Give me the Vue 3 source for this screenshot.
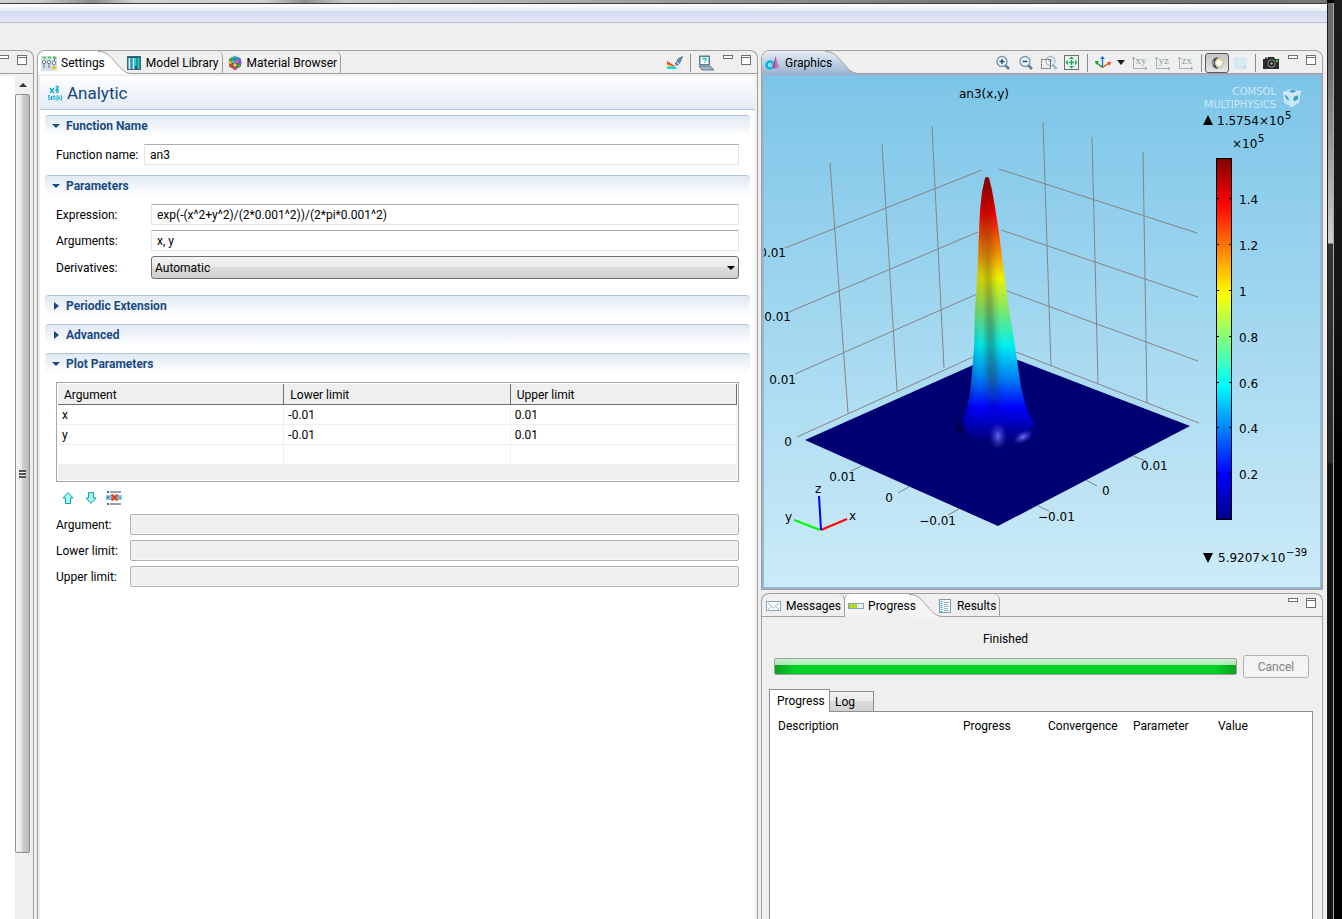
<!-- * {Script} part of code -->
<script setup>
import { ref, reactive } from 'vue'

const functionName = ref('an3')
const expression = ref('exp(-(x^2+y^2)/(2*0.001^2))/(2*pi*0.001^2)')
const functionArgs = ref('x, y')
const derivatives = ref('Automatic')

const open = reactive({
  name: true,
  parameters: true,
  periodic: false,
  advanced: false,
  plot: true
})

const limits = ref([
  { argument: 'x', lower: '-0.01', upper: '0.01' },
  { argument: 'y', lower: '-0.01', upper: '0.01' },
  { argument: '', lower: '', upper: '' }
])

const logColumns = ['Description', 'Progress', 'Convergence', 'Parameter', 'Value']

// wall grid of the 3D plot, x1 y1 x2 y2
const gridLines = [
  [218, 94, 21, 172], [214, 156, 25, 236], [213, 218, 31, 298], [209, 281, 33, 361],
  [235, 93, 433, 157], [237, 154, 434, 221], [243, 215, 434, 285], [252, 276, 435, 347],
  [66, 87, 84, 337], [118, 68, 133, 315], [168, 50, 180, 292],
  [279, 46, 287, 290], [328, 61, 334, 307], [379, 76, 383, 327],
  [98, 390, 87, 395], [145, 411, 134, 417], [195, 433, 184, 439],
  [369, 380, 382, 385], [322, 404, 333, 410], [274, 430, 285, 435]
]

const plotLabels = [
  { x: 22, y: 181, text: '0.01', anchor: 'end' },
  { x: 27, y: 245, text: '0.01', anchor: 'end' },
  { x: 32, y: 308, text: '0.01', anchor: 'end' },
  { x: 28, y: 370, text: '0', anchor: 'end' },
  { x: 92, y: 405, text: '0.01', anchor: 'end' },
  { x: 129, y: 426, text: '0', anchor: 'end' },
  { x: 192, y: 449, text: '−0.01', anchor: 'end' },
  { x: 377, y: 394, text: '0.01', anchor: 'start' },
  { x: 338, y: 419, text: '0', anchor: 'start' },
  { x: 274, y: 445, text: '−0.01', anchor: 'start' },
  { x: 51, y: 417, text: 'z', anchor: 'start' },
  { x: 21, y: 445, text: 'y', anchor: 'start' },
  { x: 85, y: 444, text: 'x', anchor: 'start' }
]

const legendTicks = [
  { y: 122, text: '1.4' },
  { y: 168, text: '1.2' },
  { y: 214, text: '1' },
  { y: 260, text: '0.8' },
  { y: 306, text: '0.6' },
  { y: 351, text: '0.4' },
  { y: 397, text: '0.2' }
]
</script>

<!-- * Template {Html} part of code -->
<template>
  <div class="desktop">
    <div class="window">
      <div class="desktop-strip"></div>
      <div class="title-bar"></div>
      <div class="workbench">
        <!-- model tree, cut off by the window edge -->
        <section class="panel tree-panel">
          <div class="panel-head">
            <div class="tools">
              <button class="min-btn" aria-label="Minimize"></button>
              <button class="max-btn" aria-label="Maximize"></button>
            </div>
          </div>
          <div class="tree-body">
            <div class="tree-content"></div>
            <div class="scrollbar">
              <div class="scroll-up"></div>
              <div class="scroll-thumb">
                <div class="scroll-grip"></div>
              </div>
            </div>
          </div>
        </section>

        <!-- settings -->
        <section class="panel">
          <div class="panel-head">
            <button class="tab active">
              <svg class="slope" viewBox="0 0 33 23"><path class="slope-fill" d="M0 0C9 0 12 5 18 12S27 22 33 22.500V23H0Z" /><path class="slope-line" d="M0 .5C9 .5 12 5 18 12S27 22 33 22.500" /></svg>
              <svg class="icon" viewBox="0 0 16 16">
                <rect width="16" height="15" y="1" fill="#d7e0e8" />
                <path d="M2 2.500h3M7 2.500h3M12 2.500h3" stroke="#3cc52c" stroke-width="1.500" />
                <g fill="#fff" stroke="#6f8797"><circle cx="3" cy="7" r="1.700" /><circle cx="8" cy="7" r="1.700" /><circle cx="13" cy="8" r="1.700" /></g>
                <path d="M3 9v4M8 9v4M13.500 3v3" stroke="#6f8797" stroke-width="1.200" />
                <rect x="11.500" y="11" width="3" height="3" fill="#f7b21c" />
              </svg>
              <span>Settings</span>
            </button>
            <button class="tab">
              <svg class="icon" viewBox="0 0 16 16">
                <rect x="1.500" y="1.500" width="13" height="13" fill="#12606f" stroke="#3f6474" />
                <path d="M3.500 3v11M7.500 3v11" stroke="#eefcff" stroke-width="2" />
                <path d="M5.500 3v11" stroke="#18a8e0" stroke-width="2" />
                <path d="M9.500 3v8M12.500 3v11" stroke="#1fd4cc" stroke-width="2" />
              </svg>
              <span>Model Library</span>
            </button>
            <button class="tab">
              <svg class="icon" viewBox="0 0 16 16">
                <path d="M8 1l6 3v7l-6 4-6-4V4z" fill="#55606a" />
                <circle cx="8" cy="2.500" r="1.700" fill="#2cb5d8" /><circle cx="4.500" cy="4" r="1.700" fill="#35b44a" /><circle cx="11.500" cy="4" r="1.700" fill="#2c8fe0" />
                <circle cx="3" cy="7.500" r="1.700" fill="#f0b429" /><circle cx="6.500" cy="6.500" r="1.700" fill="#22c6d8" /><circle cx="10" cy="6.500" r="1.700" fill="#e55bd0" /><circle cx="13" cy="7.500" r="1.700" fill="#8d4ce0" />
                <circle cx="4" cy="11" r="1.700" fill="#e8442e" /><circle cx="8" cy="10" r="1.700" fill="#f0d429" /><circle cx="12" cy="11" r="1.700" fill="#35b44a" />
                <circle cx="8" cy="13.500" r="1.700" fill="#e23a5a" />
              </svg>
              <span>Material Browser</span>
            </button>
            <div class="tools">
              <button class="tool" aria-label="Plot">
                <svg class="icon" viewBox="0 0 16 16">
                  <path d="M0 6l8 5v3H0z" fill="#f0452a" />
                  <path d="M0 9l8 3v2H0z" fill="#ffd92e" />
                  <path d="M0 11.500h8l2 2.500H0z" fill="#17d3f2" />
                  <path d="M15.500 1.500l-4 2-3 5 1 2 3-2z" fill="#5a8db8" stroke="#3b6687" stroke-width=".7" />
                  <path d="M10 7l2 2" stroke="#eaf4fb" />
                </svg>
              </button>
              <span class="sep"></span>
              <button class="tool" aria-label="Help">
                <svg class="icon" viewBox="0 0 16 16">
                  <rect x="1" y=".500" width="11" height="10" fill="#5f7d92" />
                  <rect x="2.500" y="2" width="8" height="7" fill="#fff" />
                  <path d="M5 4.500V3.500h3v1.500l-1.500 1M6.500 7v1" fill="none" stroke="#10c8c0" stroke-width="1.300" />
                  <path d="M1 11h11l4 4H4z" fill="#9fb4c3" stroke="#5f7d92" />
                </svg>
              </button>
              <button class="min-btn" aria-label="Minimize"></button>
              <button class="max-btn" aria-label="Maximize"></button>
            </div>
          </div>

          <div class="form">
            <header class="form-head">
              <svg class="icon" viewBox="0 0 16 16">
                <path d="M3 3l4 5M7 3L3 8M9 2.500c0-2 3-1 2 0L9 5h3M9 7h3" fill="none" stroke="#11a9d0" stroke-width="1.400" />
                <path d="M3 10.500H1.500v2H3v2H1M4.500 11v4M6 15v-4h2v4M10.500 10q-1.500 3 0 6M11 11.500l2 3M13 11.500l-2 3M14 10q1.500 3 0 6" fill="none" stroke="#19b3cf" />
              </svg>
              <h1>Analytic</h1>
            </header>

            <div class="section">
              <button class="section-head" @click="open.name = !open.name">
                <span class="twisty" :class="{ opened: open.name }"></span>Function Name
              </button>
              <div class="section-body" v-if="open.name">
                <div class="row">
                  <label for="fn-name" class="label-name">Function name:</label>
                  <input id="fn-name" type="text" v-model="functionName" />
                </div>
              </div>
            </div>

            <div class="section">
              <button class="section-head" @click="open.parameters = !open.parameters">
                <span class="twisty" :class="{ opened: open.parameters }"></span>Parameters
              </button>
              <div class="section-body parameters" v-if="open.parameters">
                <div class="row">
                  <label for="expression" class="label-param">Expression:</label>
                  <input id="expression" type="text" v-model="expression" />
                </div>
                <div class="row">
                  <label for="arguments" class="label-param">Arguments:</label>
                  <input id="arguments" type="text" v-model="functionArgs" />
                </div>
                <div class="row">
                  <label for="derivatives" class="label-param">Derivatives:</label>
                  <div class="select-box">
                    <select id="derivatives" v-model="derivatives">
                      <option>Automatic</option>
                      <option>Manual</option>
                    </select>
                  </div>
                </div>
              </div>
            </div>

            <div class="section">
              <button class="section-head" @click="open.periodic = !open.periodic">
                <span class="twisty" :class="{ opened: open.periodic }"></span>Periodic Extension
              </button>
            </div>

            <div class="section">
              <button class="section-head" @click="open.advanced = !open.advanced">
                <span class="twisty" :class="{ opened: open.advanced }"></span>Advanced
              </button>
            </div>

            <div class="section">
              <button class="section-head" @click="open.plot = !open.plot">
                <span class="twisty" :class="{ opened: open.plot }"></span>Plot Parameters
              </button>
              <div class="section-body" v-if="open.plot">
                <div class="limits-box">
                  <table class="limits">
                    <thead>
                      <tr>
                        <th>Argument</th>
                        <th>Lower limit</th>
                        <th>Upper limit</th>
                      </tr>
                    </thead>
                    <tbody>
                      <tr v-for="(row, i) in limits" :key="i">
                        <td>{{ row.argument }}</td>
                        <td>{{ row.lower }}</td>
                        <td>{{ row.upper }}</td>
                      </tr>
                    </tbody>
                  </table>
                </div>
                <div class="limits-tools">
                  <button class="tool" aria-label="Move up">
                    <svg class="icon" viewBox="0 0 16 16"><path d="M8 2.500l5 5.500h-2.500v5.500h-5V8H3z" fill="#a5fbf3" stroke="#0ba3a3" /></svg>
                  </button>
                  <button class="tool" aria-label="Move down">
                    <svg class="icon" viewBox="0 0 16 16"><path d="M8 13.500L3 8h2.500V2.500h5V8H13z" fill="#a5fbf3" stroke="#0ba3a3" /></svg>
                  </button>
                  <button class="tool" aria-label="Delete">
                    <svg class="icon" viewBox="0 0 16 16">
                      <rect y="5" width="16" height="5" fill="#79cdf0" />
                      <path d="M4 2h11M4 14h11M4 7.500h11" stroke="#8fa3b2" stroke-width="2" />
                      <path d="M1 2h2M1 14h2M1 7.500h2" stroke="#536b7c" stroke-width="2" />
                      <path d="M5.500 4.500l6 6M11.500 4.500l-6 6" stroke="#ee3d0c" stroke-width="2" />
                    </svg>
                  </button>
                </div>
                <div class="row">
                  <label for="argument" class="label-plot">Argument:</label>
                  <input id="argument" type="text" disabled />
                </div>
                <div class="row">
                  <label for="lower" class="label-plot">Lower limit:</label>
                  <input id="lower" type="text" disabled />
                </div>
                <div class="row">
                  <label for="upper" class="label-plot">Upper limit:</label>
                  <input id="upper" type="text" disabled />
                </div>
              </div>
            </div>
          </div>
        </section>

        <div class="right-column">
          <!-- graphics -->
          <section class="panel focused">
            <div class="panel-head">
              <button class="tab active">
                <svg class="slope" viewBox="0 0 33 23"><path fill="url(#tabBlue)" d="M0 0C9 0 12 5 18 12S27 22 33 22.500V23H0Z" /><path class="slope-line" d="M0 .5C9 .5 12 5 18 12S27 22 33 22.500" />
                  <defs><linearGradient id="tabBlue" x1="0" y1="0" x2="0" y2="1"><stop offset="0" stop-color="#e6edf4" /><stop offset="1" stop-color="#99b4d1" /></linearGradient></defs>
                </svg>
                <svg class="icon" viewBox="0 0 16 16">
                  <circle cx="5" cy="10" r="3.500" fill="#7fe3f2" stroke="#0fb4d8" stroke-width="2.500" />
                  <path d="M10.500 1L7 12q3 3 7 0z" fill="#c078bd" />
                  <path d="M10.500 1L8 13l2 .700z" fill="#8c4a92" />
                </svg>
                <span>Graphics</span>
              </button>
              <div class="tools">
                <button class="tool" aria-label="Zoom in">
                  <svg class="icon" viewBox="0 0 16 16">
                    <path d="M10 10l4 4" stroke="#5b7f9c" stroke-width="2.500" />
                    <circle cx="7" cy="6.500" r="5" fill="#eef5f9" stroke="#7795aa" stroke-width="1.300" />
                    <path d="M4.500 6.500h5M7 4v5" stroke="#1d4f7c" stroke-width="1.400" />
                  </svg>
                </button>
                <button class="tool" aria-label="Zoom out">
                  <svg class="icon" viewBox="0 0 16 16">
                    <path d="M10 10l4 4" stroke="#5b7f9c" stroke-width="2.500" />
                    <circle cx="7" cy="6.500" r="5" fill="#eef5f9" stroke="#7795aa" stroke-width="1.300" />
                    <path d="M4.500 6.500h5" stroke="#1d4f7c" stroke-width="1.400" />
                  </svg>
                </button>
                <button class="tool" aria-label="Zoom box">
                  <svg class="icon" viewBox="0 0 16 16">
                    <path d="M12 10l3.500 4" stroke="#9db3c3" stroke-width="2.500" />
                    <circle cx="9.500" cy="6" r="4.500" fill="#eef2f5" stroke="#a9b9c4" stroke-width="1.300" />
                    <path d="M7.500 6h4M9.500 4v4" stroke="#8fa5b4" />
                    <path d="M.5 4.500h9v9h-9z" fill="none" stroke="#555" stroke-dasharray="2 1" />
                  </svg>
                </button>
                <button class="tool" aria-label="Zoom extents">
                  <svg class="icon" viewBox="0 0 16 16">
                    <rect x=".500" y=".500" width="14" height="14" fill="#e6f5ec" stroke="#6c7073" />
                    <path d="M7.500 5v5M5 7.500h5" stroke="#1ca551" stroke-width="1.300" />
                    <path d="M7.500 1.500L10 4H5zM7.500 13.500L10 11H5zM1.500 7.500L4 5v5zM13.500 7.500L11 5v5z" fill="#1ca551" />
                  </svg>
                </button>
                <span class="sep"></span>
                <button class="tool" aria-label="Default view">
                  <svg class="icon" viewBox="0 0 16 16">
                    <path d="M7.500 12V3" stroke="#1272d6" stroke-width="1.300" /><path d="M5 4L7.500 1 10 4z" fill="#1272d6" />
                    <path d="M7.500 12.500L2 8" stroke="#11a424" stroke-width="1.500" /><path d="M0 6h4L1 10z" fill="#11a424" />
                    <path d="M7.500 12.500l6-4" stroke="#ee4a12" stroke-width="1.500" /><path d="M16 7l-1.500 4L12 7z" fill="#ee4a12" />
                  </svg>
                </button>
                <button class="drop" aria-label="Views"></button>
                <button class="tool" aria-label="XY view">
                  <svg class="icon" viewBox="0 0 16 16"><path class="axes" d="M1.500 2v11.500H14M0 4l1.500-2L3 4M13 12l2 1.500-2 1.500" /><text class="axes-text" x="3.500" y="9">xy</text></svg>
                </button>
                <button class="tool" aria-label="YZ view">
                  <svg class="icon" viewBox="0 0 16 16"><path class="axes" d="M1.500 2v11.500H14M0 4l1.500-2L3 4M13 12l2 1.500-2 1.500" /><text class="axes-text" x="3.500" y="9">yz</text></svg>
                </button>
                <button class="tool" aria-label="ZX view">
                  <svg class="icon" viewBox="0 0 16 16"><path class="axes" d="M1.500 2v11.500H14M0 4l1.500-2L3 4M13 12l2 1.500-2 1.500" /><text class="axes-text" x="3.500" y="9">zx</text></svg>
                </button>
                <span class="sep"></span>
                <button class="tool toggled" aria-label="Scene light" aria-pressed="true">
                  <svg class="icon" viewBox="0 0 16 16">
                    <path d="M9 2A6 6 0 1 0 9 14Q6 8 9 2z" fill="#4d5052" />
                    <path d="M8 4l4-1 3 5-3 5-4-1-2-4z" fill="#fdfdf4" stroke="#b9b9b0" />
                    <circle cx="10" cy="8" r="3.500" fill="#fff" stroke="#e6cd6a" />
                    <path d="M2 8l3-2.500v5z" fill="#8b9bb0" />
                  </svg>
                </button>
                <button class="tool" aria-label="Transparency">
                  <svg class="icon" viewBox="0 0 16 16">
                    <path d="M2 5l3-3h10v9l-3 3H2z" fill="#b8d0de" />
                    <rect x="5" y="2" width="10" height="9" fill="#d9ebf4" />
                    <path d="M2 4h10v10H2z" fill="#dcecf5" fill-opacity=".8" />
                  </svg>
                </button>
                <span class="sep"></span>
                <button class="tool" aria-label="Image snapshot">
                  <svg class="icon" viewBox="0 0 16 16">
                    <path d="M0 4h4l1-2h6l1 2h4v10H0z" fill="#2b2b2b" />
                    <rect x="2" y="2.500" width="2" height="1.500" fill="#444" />
                    <circle cx="8.500" cy="8.500" r="4" fill="#8a8a8a" /><circle cx="8.500" cy="8.500" r="3" fill="#1d1d1d" /><circle cx="8.500" cy="8.500" r="1.300" fill="#b0b0b0" />
                    <rect x="13" y="5" width="2" height="2" fill="#31d04a" />
                  </svg>
                </button>
                <button class="min-btn" aria-label="Minimize"></button>
                <button class="max-btn" aria-label="Maximize"></button>
              </div>
            </div>

            <div class="canvas">
              <svg class="plot" viewBox="0 0 556 511" role="img" aria-label="an3(x,y)">
                <defs>
                  <linearGradient id="legend" x1="0" y1="1" x2="0" y2="0">
                    <stop offset="0" stop-color="#000084" />
                    <stop offset=".125" stop-color="#0000ff" />
                    <stop offset=".375" stop-color="#00ffff" />
                    <stop offset=".625" stop-color="#ffff00" />
                    <stop offset=".875" stop-color="#ff0000" />
                    <stop offset="1" stop-color="#800000" />
                  </linearGradient>
                  <linearGradient id="peak" gradientUnits="userSpaceOnUse" x1="0" y1="101" x2="0" y2="366">
                    <stop offset="0" stop-color="#7a0808" />
                    <stop offset=".06" stop-color="#b80000" />
                    <stop offset=".14" stop-color="#f00400" />
                    <stop offset=".27" stop-color="#f08000" />
                    <stop offset=".38" stop-color="#f0f000" />
                    <stop offset=".5" stop-color="#80e868" />
                    <stop offset=".635" stop-color="#00f0f0" />
                    <stop offset=".76" stop-color="#0080f4" />
                    <stop offset=".87" stop-color="#0000fa" />
                    <stop offset=".94" stop-color="#0000b4" />
                    <stop offset="1" stop-color="#000072" />
                  </linearGradient>
                  <linearGradient id="shade" gradientUnits="userSpaceOnUse" x1="0" y1="101" x2="0" y2="350">
                    <stop offset="0" stop-color="#301808" stop-opacity=".3" />
                    <stop offset=".8" stop-color="#303030" stop-opacity=".45" />
                    <stop offset="1" stop-color="#000060" stop-opacity="0" />
                  </linearGradient>
                  <radialGradient id="foot">
                    <stop offset="0" stop-color="#0000c0" />
                    <stop offset=".5" stop-color="#0000a0" />
                    <stop offset="1" stop-color="#000072" stop-opacity="0" />
                  </radialGradient>
                  <radialGradient id="glow">
                    <stop offset="0" stop-color="#8080ff" />
                    <stop offset="1" stop-color="#4040e0" stop-opacity="0" />
                  </radialGradient>
                  <radialGradient id="dark">
                    <stop offset="0" stop-color="#00003c" />
                    <stop offset="1" stop-color="#000050" stop-opacity="0" />
                  </radialGradient>
                  <filter id="soft" x="-100%" y="-10%" width="300%" height="120%"><feGaussianBlur stdDeviation="3 3" /></filter>
                  <clipPath id="peakClip">
                    <path d="M221 102Q223 100 225 102L228 114 231 131 235 157 240 197 244 227 249 257 253 284 257 311 262 331 270 348 282 364H188L198 348 203 332 206 317 208 297 210 271 211 234 213 204 215 157 216 134 218 116Z" />
                  </clipPath>
                </defs>

                <text x="195" y="22">an3(x,y)</text>
                <g class="grid">
                  <line v-for="(l, i) in gridLines" :key="i" :x1="l[0]" :y1="l[1]" :x2="l[2]" :y2="l[3]" />
                </g>

                <!-- surface -->
                <path d="M41 364L236 277 426 350 234 450Z" fill="#000072" />
                <ellipse cx="237" cy="352" rx="44" ry="17" fill="url(#foot)" />
                <path d="M221 102Q223 100 225 102L228 114 231 131 235 157 240 197 244 227 249 257 253 284 257 311 262 331 270 348Q262 366 234 366 208 366 198 348L203 332 206 317 208 297 210 271 211 234 213 204 215 157 216 134 218 116Z" fill="url(#peak)" />
                <g clip-path="url(#peakClip)">
                  <path d="M221 102L226 112 228 200 233 290 236 350H226L222 290 220 200Z" fill="url(#shade)" filter="url(#soft)" />
                  <path d="M219 102L212 204 208 290 200 345H204L211 290 215 204Z" fill="#202040" fill-opacity=".35" filter="url(#soft)" />
                </g>
                <ellipse cx="196" cy="351" rx="8" ry="10" fill="url(#dark)" fill-opacity=".7" />
                <ellipse cx="234" cy="360" rx="9" ry="14" fill="url(#glow)" fill-opacity=".8" />
                <ellipse cx="259" cy="361" rx="11" ry="6" fill="url(#glow)" fill-opacity=".9" transform="rotate(-28 259 361)" />

                <text v-for="(t, i) in plotLabels" :key="'t' + i" :x="t.x" :y="t.y" :text-anchor="t.anchor">{{ t.text }}</text>

                <g class="triad">
                  <line x1="30" y1="444" x2="56" y2="454" stroke="#00ff00" />
                  <line x1="57" y1="454" x2="83" y2="443" stroke="#ff0000" />
                  <line x1="55" y1="420" x2="57" y2="454" stroke="#0000ff" />
                </g>

                <!-- colour legend -->
                <rect x="452.500" y="82.500" width="15" height="361" fill="url(#legend)" stroke="#000" />
                <g v-for="t in legendTicks" :key="t.text">
                  <path :d="`M453 ${t.y + 0.5}h2M465 ${t.y + 0.5}h2`" stroke="#000" />
                  <text x="475" :y="t.y + 6">{{ t.text }}</text>
                </g>
                <path d="M444 39L449 49H439Z" />
                <text x="453" y="49">1.5754×10</text>
                <text class="sup" x="521" y="43">5</text>
                <text x="468" y="72">×10</text>
                <text class="sup" x="494" y="66">5</text>
                <path d="M444 487L449 477H439Z" />
                <text x="454" y="486">5.9207×10</text>
                <text class="sup" x="522" y="480">−39</text>

                <!-- product mark -->
                <text class="brand" x="512" y="19" text-anchor="end"><tspan class="brand-cap">C</tspan>OMSOL</text>
                <text class="brand" x="512" y="32" text-anchor="end"><tspan class="brand-cap">M</tspan>ULTIPHYSICS</text>
                <g>
                  <path d="M519 16l7-3 11 2-2 12-7 4-8-4z" fill="#c2e4f5" />
                  <path d="M519 16l9 3 9-4M528 19v12" fill="none" stroke="#e9f7fd" />
                  <path d="M521 19q3 1 4 5-3 0-4-5zM530 21q5-4 4 2-3 3-5 1zM525 15q4-2 7 0-3 3-7 0z" fill="#3a9acb" />
                </g>
              </svg>
            </div>
          </section>

          <!-- progress -->
          <section class="panel progress-panel">
            <div class="panel-head">
              <button class="tab">
                <svg class="icon" viewBox="0 0 16 16">
                  <rect x=".500" y="3.500" width="14" height="9" fill="#fbfdfe" stroke="#87a3b5" />
                  <path d="M2 5l5.500 5L13 5M2 11.500l3.500-3M13 11.500l-3.500-3" fill="none" stroke="#9fb7c6" />
                </svg>
                <span>Messages</span>
              </button>
              <button class="tab active">
                <svg class="slope" viewBox="0 0 33 23"><path class="slope-fill" d="M0 0C9 0 12 5 18 12S27 22 33 22.500V23H0Z" /><path class="slope-line" d="M0 .5C9 .5 12 5 18 12S27 22 33 22.500" /></svg>
                <svg class="icon" viewBox="0 0 16 16">
                  <rect x=".500" y="5.500" width="15" height="5" fill="#e6eff5" stroke="#8aa5b6" />
                  <rect x="1" y="6" width="8" height="4" fill="#9fd60b" />
                  <path d="M3.500 6v4M6.500 6v4M9.500 6v4M12.500 6v4" stroke="#fff" stroke-opacity=".4" />
                </svg>
                <span>Progress</span>
              </button>
              <button class="tab">
                <svg class="icon" viewBox="0 0 16 16">
                  <rect x="2.500" y="1.500" width="11" height="13" fill="#f6fafc" stroke="#7f9db0" />
                  <path d="M4.500 3v11" stroke="#25a7dd" stroke-width="2" stroke-dasharray="1 1" />
                  <path d="M7 4.500h5M7 6.500h4M7 8.500h5M7 10.500h4M7 12.500h5" stroke="#9db4c2" />
                </svg>
                <span>Results</span>
              </button>
              <div class="tools">
                <button class="min-btn" aria-label="Minimize"></button>
                <button class="max-btn" aria-label="Maximize"></button>
              </div>
            </div>
            <div class="progress-body">
              <div class="progress-grid">
                <label for="job" class="job-status">Finished</label>
                <progress id="job" max="100" value="100"></progress>
                <button class="cancel" disabled>Cancel</button>
              </div>
              <div class="sub-tabs">
                <button class="sub-tab current">Progress</button>
                <button class="sub-tab">Log</button>
              </div>
              <div class="log-box">
                <table class="log">
                  <thead>
                    <tr>
                      <th v-for="c in logColumns" :key="c">{{ c }}</th>
                    </tr>
                  </thead>
                </table>
              </div>
            </div>
          </section>
        </div>
      </div>
    </div>
    <div class="window-edge"></div>
    <div class="backdrop"></div>
  </div>
</template>

<!-- * {CSS} part of code -->
<style>
body {
  background: #000;
}
</style>

<style scoped>
.desktop {
  display: flex;
  min-height: 100vh;
  font-family: Roboto, 'Open Sans', sans-serif;
  font-size: 12px;
  line-height: 16px;
  color: #000;
}

.window {
  flex: 1;
  min-width: 0;
  display: flex;
  flex-direction: column;
  background: #efefef;
}

.desktop-strip {
  height: 3px;
  background: linear-gradient(90deg, #d2d2d2, #c9c9c9 3%, #8c8c8c 7%, #d0d0d0 10%, #cfcfcf 20%, #8f8f8f 23%, #c8c8c8 26%, #8a8a8a 60%, #6f6f6f 80%, #777);
  border-bottom: 1px solid #3c3c3c;
}

.title-bar {
  height: 18px;
  background: linear-gradient(#fff, #e7edf7 38%, #d3d9ee 40%, #e3e8f7);
  border-bottom: 1px solid #b5bbd2;
}

.workbench {
  flex: 1;
  display: grid;
  grid-template-columns: 34px 1fr 562px;
  gap: 3px;
  padding: 27px 4px 0 0;
}

.window-edge {
  width: 5px;
  margin-top: 3px;
  background: linear-gradient(#6b6b6b, #6b6b6b 60px, #d0d0d0 240px, #333 241px, #2c2c2c 460px, #141414 461px);
  border-left: 1px solid #1c1c1c;
  border-right: 1px solid #aaa;
}

.backdrop {
  width: 8px;
  background: linear-gradient(#1c1c1c, #141414 300px, #000 460px);
}

button {
  font: inherit;
  color: inherit;
  padding: 0;
  border: 0;
  background: none;
}

.icon {
  display: block;
  flex: none;
  width: 16px;
  height: 16px;
}

/* panels */
.panel {
  display: flex;
  flex-direction: column;
  min-width: 0;
  border: 1px solid #a0a0a0;
  border-bottom: 0;
  border-radius: 8px 8px 0 0;
  overflow: hidden;
}

.panel-head {
  display: flex;
  height: 23px;
  box-shadow: inset 0 -1px #a0a0a0;
}

.tab {
  position: relative;
  display: flex;
  align-items: center;
  gap: 4px;
  padding: 0 3px 0 4px;
  white-space: nowrap;
  border-right: 1px solid #a0a0a0;
  border-radius: 0 6px 0 0;
}

.tab span,
.tab .icon {
  position: relative;
}

.tab.active {
  padding: 0 17px 0 3px;
  border-right: 0;
}

.tab.active::before {
  content: '';
  position: absolute;
  inset: 0 24px 0 0;
  background: #fff;
}

.slope {
  position: absolute;
  top: 0;
  right: -9px;
  width: 33px;
  height: 23px;
}

.slope-fill {
  fill: #fff;
}

.slope-line {
  fill: none;
  stroke: #a0a0a0;
}

.focused .tab.active::before {
  background: linear-gradient(#e6edf4, #99b4d1);
}

.progress-panel .tab.active::before {
  background: linear-gradient(#fff, #efefef);
  border-left: 1px solid #a0a0a0;
  border-radius: 6px 0 0 0;
  left: -1px;
}

.progress-panel .slope-fill {
  fill: #f5f5f5;
}

.tools {
  flex: 1;
  min-width: 0;
  display: flex;
  justify-content: flex-end;
  align-items: center;
  gap: 7px;
  padding-right: 6px;
}

.tool {
  flex: none;
}

.sep {
  width: 1px;
  height: 18px;
  background: #8c8c8c;
}

.min-btn,
.max-btn {
  flex: none;
  align-self: flex-start;
  width: 10px;
  margin-top: 4px;
  background: #fff;
  border: 1px solid #6e6e6e;
}

.min-btn {
  height: 4px;
  margin-left: 2px;
}

.max-btn {
  height: 10px;
  margin-left: 1px;
  box-shadow: inset 0 1px #fff, inset 0 2px #6e6e6e;
}

.drop {
  margin-left: -1px;
  border: 4px solid transparent;
  border-top: 5px solid #222;
  border-bottom: 0;
}

.axes {
  fill: none;
  stroke: #9fb0b6;
}

.axes-text {
  font-family: 'Liberation Serif', serif;
  font-size: 11px;
  fill: #8b9da4;
}

.toggled {
  width: 24px;
  height: 20px;
  margin: 0 -4px;
  padding: 0 3px;
  background: linear-gradient(#c4c4c4, #e6e6e6);
  border: 1px solid #5a5a5a;
  border-radius: 3px;
}

/* tree */
.tree-panel {
  border-left: 0;
  border-top-left-radius: 0;
}

.tree-body {
  flex: 1;
  display: flex;
  padding: 2px 2px 0 0;
}

.tree-content {
  flex: 1;
  background: #fff;
}

.scrollbar {
  width: 16px;
  display: flex;
  flex-direction: column;
  padding-bottom: 66px;
  background: #f0f0f0;
}

.scroll-up {
  height: 18px;
  display: flex;
  align-items: center;
  justify-content: center;
}

.scroll-up::after {
  content: '';
  border: 4px solid transparent;
  border-top: 0;
  border-bottom: 4px solid #333;
}

.scroll-thumb {
  flex: 1;
  display: flex;
  align-items: center;
  justify-content: center;
  background: linear-gradient(90deg, #f5f5f5, #e6e6e8 45%, #cfcfd3 50%, #b9b9bf);
  border: 1px solid #8f8f94;
  border-radius: 2px;
  margin-right: 1px;
}

.scroll-grip {
  width: 7px;
  height: 8px;
  background: repeating-linear-gradient(#555 0 2px, #eee 2px 3px);
}

/* settings form */
.form {
  flex: 1;
  margin: 2px 2px 0;
  background: #fff;
}

.form-head {
  display: flex;
  align-items: center;
  gap: 4px;
  height: 33px;
  padding-left: 7px;
  background: linear-gradient(#fff, #e3eaf4);
  border-bottom: 1px solid #afc7dc;
}

.form-head h1 {
  margin: 0;
  font-size: 17px;
  font-weight: 400;
  line-height: 22px;
  color: #16467c;
}

.section {
  margin: 5px 5px 0;
}

.section + .section {
  margin-top: 8px;
}

.section-head {
  display: flex;
  align-items: center;
  width: 100%;
  height: 21px;
  padding-left: 6px;
  font-weight: 700;
  color: #1a4a82;
  background: linear-gradient(#e1e9f3, #fff);
  border-top: 1px solid #b0c5da;
  border-radius: 4px 4px 0 0;
}

.twisty {
  width: 15px;
  display: flex;
}

.twisty::after {
  content: '';
  margin-left: 3px;
  border: 4px solid transparent;
  border-left: 5px solid #1a4a82;
  border-right: 0;
}

.twisty.opened::after {
  margin-left: 1px;
  border: 4px solid transparent;
  border-top: 4px solid #1a4a82;
  border-bottom: 0;
}

.section-body {
  display: flex;
  flex-direction: column;
  gap: 5px;
  padding: 8px 11px 2px;
}

.section-body.parameters {
  padding-bottom: 8px;
}

.row {
  display: flex;
  align-items: center;
}

.label-name {
  width: 88px;
}

.label-param {
  width: 95px;
}

.label-plot {
  width: 74px;
}

.row label {
  flex: none;
  white-space: nowrap;
}

input {
  flex: 1;
  min-width: 0;
  box-sizing: border-box;
  height: 21px;
  padding: 0 5px;
  font: inherit;
  color: #000;
  background: #fff;
  border: 1px solid #e1e4ea;
  border-top-color: #abadb3;
  border-radius: 1px;
}

input:disabled {
  background: #efefef;
  border-color: #b0b0b0;
  border-radius: 2px;
  box-shadow: inset 0 0 0 1px #f6f6f6;
}

.select-box {
  position: relative;
  flex: 1;
}

.select-box::after {
  content: '';
  position: absolute;
  top: 10px;
  right: 4px;
  border: 4px solid transparent;
  border-top: 4px solid #000;
  border-bottom: 0;
  pointer-events: none;
}

select {
  display: block;
  width: 100%;
  height: 23px;
  padding: 0 3px;
  font: inherit;
  color: #000;
  appearance: none;
  background: linear-gradient(#f2f2f2, #ebebeb 48%, #dcdcdc 50%, #cfcfcf);
  border: 1px solid #707070;
  border-radius: 3px;
}

.limits-box {
  padding: 1px 1px 16px;
  background: #efefef;
  border: 1px solid #a3a6aa;
  box-shadow: inset 0 0 0 1px #fff;
}

.limits {
  width: 100%;
  table-layout: fixed;
  border-collapse: separate;
  border-spacing: 0;
}

.limits th,
.limits td {
  height: 20px;
  box-sizing: border-box;
  line-height: 16px;
  text-align: left;
  font-weight: 400;
}

.limits th {
  height: 21px;
  padding: 2px 6px 0;
  border-right: 1px solid #6d6d6d;
  border-bottom: 1px solid #6d6d6d;
}

.limits td {
  padding: 0 4px;
  background: #fff;
  border-right: 1px solid #efefef;
  border-bottom: 1px solid #efefef;
}

.limits-tools {
  display: flex;
  gap: 7px;
  padding: 3px 0 3px 4px;
}

/* right side */
.right-column {
  display: flex;
  flex-direction: column;
  gap: 3px;
  min-width: 0;
}

.focused {
  border-bottom: 1px solid #a0a0a0;
}

.canvas {
  padding: 2px;
  background: #99b4d1;
}

.plot {
  display: block;
  width: 100%;
  background: linear-gradient(#7cc5e8, #ccebf8);
}

.plot text {
  font-family: 'DejaVu Sans', sans-serif;
  font-size: 12px;
}

.plot text.sup {
  font-size: 10px;
}

.plot text.brand {
  font-size: 10px;
  fill: #fff;
  fill-opacity: 0.6;
}

.brand-cap {
  font-size: 11px;
}

.grid line {
  stroke: #848484;
}

.triad line {
  stroke-width: 2;
}

.progress-panel {
  flex: 1;
}

.progress-body {
  flex: 1;
  display: flex;
  flex-direction: column;
  padding: 14px 9px 0 7px;
}

.progress-grid {
  display: grid;
  grid-template-columns: 1fr 66px;
  align-items: center;
  gap: 8px 6px;
  padding: 0 4px 0 5px;
}

.job-status {
  grid-column: 1 / 2;
  justify-self: center;
}

progress {
  grid-row: 2;
  display: block;
  width: 100%;
  height: 17px;
  box-sizing: border-box;
  appearance: none;
  border: 1px solid #a0a0a0;
  border-radius: 2px;
  overflow: hidden;
}

progress::-webkit-progress-bar {
  background: #e6e6e6;
}

progress::-webkit-progress-value {
  background:
    linear-gradient(rgba(255, 255, 255, 0.8), rgba(255, 255, 255, 0.65) 40%, transparent 41%),
    linear-gradient(90deg, #10a020, #00d228 20px, #00d228 calc(100% - 20px), #10a020);
}

.cancel {
  grid-row: 2;
  height: 23px;
  color: #838383;
  background: #f4f4f4;
  border: 1px solid #adb2b5;
  border-radius: 3px;
}

.sub-tabs {
  display: flex;
  align-items: flex-end;
  height: 22px;
  margin-top: 11px;
}

.sub-tab {
  width: 44px;
  height: 20px;
  padding: 0 5px;
  text-align: left;
  background: linear-gradient(#f2f2f2, #ebebeb 48%, #dcdcdc 50%, #d0d0d0);
  border: 1px solid #8c8e98;
  border-left: 0;
  border-bottom: 0;
}

.sub-tab.current {
  position: relative;
  width: 61px;
  height: 23px;
  margin-bottom: -1px;
  padding: 0 7px;
  background: #fff;
  border-left: 1px solid #8c8e98;
}

.log-box {
  flex: 1;
  background: #fff;
  border: 1px solid #8c8e98;
  border-bottom: 0;
}

.log {
  width: 100%;
  table-layout: fixed;
  border-spacing: 0;
}

.log th {
  width: 85px;
  height: 28px;
  box-sizing: border-box;
  padding: 0 0 0 8px;
  text-align: left;
  font-weight: 400;
}

.log th:first-child {
  width: 185px;
}

.log th:last-child {
  width: auto;
}
</style>
